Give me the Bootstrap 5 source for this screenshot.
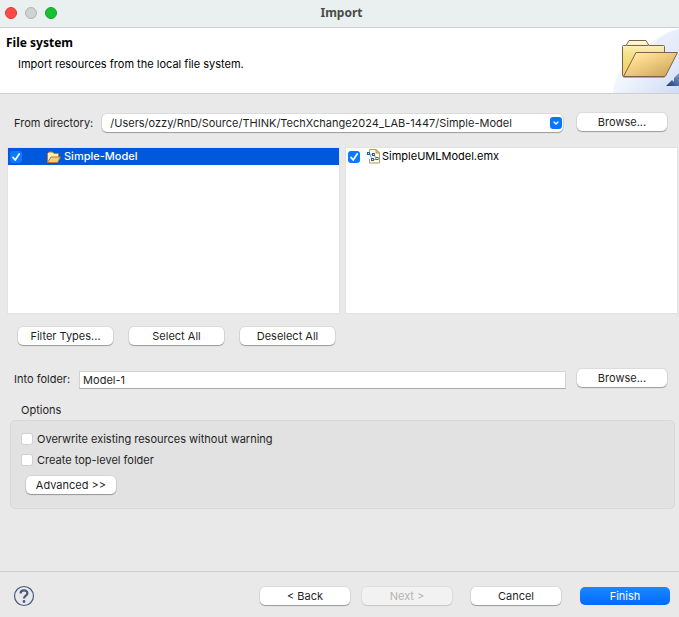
<!DOCTYPE html>
<html lang="en">
<head>
<meta charset="utf-8">
<meta name="viewport" content="width=device-width, initial-scale=1">
<title>Import</title>
<link href="https://cdn.jsdelivr.net/npm/bootstrap@5.3.0/dist/css/bootstrap.min.css" rel="stylesheet">
<style>
  body { font: 11px/16px Inter, "Liberation Sans", sans-serif; color: #1f1f1f; background: #e9e9e9; }
  .titlebar { height: 28px; background: #eaf0f0; border-bottom: 1px solid #cdcfcf; padding: 0 5px; }
  .titlebar h1 { font: 700 12px/16px "Noto Sans", sans-serif; color: #474b4b; padding: 0 0 2px 4px; }
  .lights { gap: 8px; top: 7px; }
  .light { width: 12px; height: 12px; padding: 0; border: 1px solid; border-radius: 50%; }
  .light-close { background: #fe4b47; border-color: #e0352f; }
  .light-min { background: #cfd2d2; border-color: #b0b4b4; }
  .light-zoom { background: #18c132; border-color: #12a028; }
  .banner { height: 66px; background: #fff; border-bottom: 1px solid #cfcfcf; color: #000; }
  .banner h2 { font: 700 12px/16px "Noto Sans", sans-serif; margin: 7px 0 5px 6px; }
  .banner p { margin: 0 0 0 18px; }
  .mac-btn { height: 18px; min-width: 90px; padding: 0 8px; border: 0; border-radius: 5px; background: #fff; color: #1f1f1f;
    font-size: 11px; line-height: 18px; box-shadow: 0 0 0 1px #0000000f, 0 1px 1px #0000004d; }
  .mac-btn:hover { background: #f5f5f5; color: #1f1f1f; }
  .mac-btn:disabled { background: #f2f2f2; color: #b4b4b4; opacity: 1; border: 0; box-shadow: 0 0 0 1px #0000000a, 0 1px 1px #0000001f; }
  .mac-btn.finish, .mac-btn.finish:hover { background: linear-gradient(#1a87ff, #006cff); color: #fff; box-shadow: none; }
  .filters .mac-btn { width: 95px; }
  .field-row { padding: 0 12px 0 14px; }
  .from-row { margin-top: 18px; gap: 14px; }
  .from-field { padding-top: 2px; gap: 9px; }
  .combo select { appearance: none; height: 18px; padding: 0 22px 0 8px; border: 0; border-radius: 5px; background: #fff; color: #1f1f1f;
    font-size: 11px; line-height: 18px; box-shadow: 0 0 0 1px #0000000f, 0 1px 1px #0000004d; }
  .combo svg { position: absolute; right: 1px; top: 3px; pointer-events: none; }
  .lists { margin: 16px 2px 0 8px; gap: 7px; }
  .pane { flex: 1 1 0; min-width: 0; height: 165px; background: #fff; box-shadow: 0 0 0 1px #e2e2e2; color: #000; }
  .entry { height: 17px; line-height: 17px; padding-left: 2px; }
  .entry svg { margin: 0 2px 0 7px; }
  .entry.selected svg { margin-left: 24px; }
  .entry.selected { background: #0058dc; color: #fff; font-weight: 500; }
  .tick { appearance: none; flex: none; width: 12px; height: 12px; border-radius: 3px; margin: 0; background: #fff;
    box-shadow: inset 0 0 0 1px #0000002e; }
  .tick:checked { background: #0a7aff url("data:image/svg+xml,%3Csvg xmlns='http://www.w3.org/2000/svg' viewBox='0 0 12 12'%3E%3Cpath d='M3 6.4 5.2 9 9.2 3' fill='none' stroke='white' stroke-width='1.7' stroke-linecap='round' stroke-linejoin='round'/%3E%3C/svg%3E"); box-shadow: none; }
  .filters { margin: 14px 0 0 18px; gap: 16px; }
  .into-row { margin-top: 24px; gap: 11px; }
  .into-field { gap: 9px; }
  .into-row input { height: 18px; padding: 0 3px; border: 1px solid #d3d3d3; border-bottom-color: #a9a9a9; border-radius: 0; background: #fff; color: #1f1f1f; font-size: 11px; margin-top: 2px; }
  .options { margin: 13px 4px 24px 10px; }
  .options legend { font-size: 11px; line-height: 16px; margin: 0 0 2px 11px; float: none; width: auto; }
  .group { padding: 10px 10px 14px; background: #e2e2e2; border: 1px solid #d8d8d8; border-radius: 5px; }
  .group label { height: 16px; margin-bottom: 5px; gap: 4px; }
  .group .mac-btn { margin: 3px 0 0 5px; }
  .foot { height: 46px; padding: 2px 9px 0 13px; border-top: 1px solid #cdcdcd; }
  .foot-btns { gap: 19px; }
  .step-btns { gap: 12px; }
</style>
</head>
<body class="d-flex flex-column min-vh-100">
<header class="titlebar position-relative d-flex align-items-center">
  <div class="lights d-flex position-absolute">
    <button type="button" class="light light-close" aria-label="Close"></button>
    <button type="button" class="light light-min" aria-label="Minimize" disabled></button>
    <button type="button" class="light light-zoom" aria-label="Zoom"></button>
  </div>
  <h1 class="m-0 flex-fill text-center">Import</h1>
</header>
<section class="banner d-flex justify-content-between overflow-hidden">
  <div>
    <h2>File system</h2>
    <p>Import resources from the local file system.</p>
  </div>
  <svg class="flex-shrink-0" width="67" height="65" viewBox="0 0 67 65" aria-hidden="true">
    <defs>
      <linearGradient id="sky" x1="0" y1="0" x2="1" y2="1"><stop offset="0" stop-color="#fff"/><stop offset=".5" stop-color="#f0f4fc"/><stop offset="1" stop-color="#cfdcf5"/></linearGradient>
      <linearGradient id="back" x1="0" y1="0" x2="0" y2="1"><stop offset="0" stop-color="#fffbe0"/><stop offset=".35" stop-color="#f5e28a"/><stop offset="1" stop-color="#edcf5c"/></linearGradient>
      <linearGradient id="front" x1="0" y1="0" x2="1" y2="1"><stop offset="0" stop-color="#fff3cf"/><stop offset=".3" stop-color="#fbd98c"/><stop offset="1" stop-color="#c59f52"/></linearGradient>
      <linearGradient id="peak" x1="0" y1="1" x2="1" y2="0"><stop offset="0" stop-color="#1d3a78"/><stop offset="1" stop-color="#7f9bcb"/></linearGradient>
    </defs>
    <path d="M1 65C3 45 14 32 32 20 43 11 54 3 67 1V65Z" fill="url(#sky)"/>
    <path d="M39 19C46 11 56 4 67 1V30Z" fill="#dfe8f8" opacity=".5"/>
    <path d="M54 58 60 52 62 54V50L67 45V58Z" fill="url(#peak)"/>
    <path d="M10.500 47V18.500Q10.500 17.500 11.500 17.500H14L17 12.500H34L37 17.500H51.500Q52.500 17.500 52.500 18.500V49H11.500Z" fill="url(#back)" stroke="#80614c"/>
    <path d="M14.500 17.500H36.500" stroke="#80614c"/>
    <path d="M24 24.500H65.500L53.500 48Q53 48.500 52 48.500H11.500Z" fill="url(#front)" stroke="#80614c" stroke-linejoin="round"/>
  </svg>
</section>
<main>
  <div class="from-row field-row d-flex align-items-center">
    <div class="from-field d-flex flex-fill align-items-center">
      <label for="from" class="text-nowrap">From directory:</label>
      <div class="combo position-relative flex-fill">
        <select id="from" class="w-100 d-block"><option>/Users/ozzy/RnD/Source/THINK/TechXchange2024_LAB-1447/Simple-Model</option></select>
        <svg width="12" height="12" viewBox="0 0 12 12" aria-hidden="true"><rect width="12" height="12" rx="3" fill="#0a76ff"/><path d="m4 5 2 2 2-2" fill="none" stroke="#fff" stroke-width="1.400" stroke-linecap="round" stroke-linejoin="round"/></svg>
      </div>
    </div>
    <button type="button" class="btn mac-btn">Browse...</button>
  </div>
  <div class="lists d-flex">
    <ul class="pane list-unstyled mb-0">
      <li><label class="entry selected d-flex align-items-center">
        <input type="checkbox" class="tick" checked>
        <svg width="16" height="14" viewBox="0 0 16 14" aria-hidden="true"><path d="M1.500 12V3.500L3 2H6.500L8 3.500H12.500V7" fill="#fff0bd" stroke="#b9782c"/><path d="M1.500 12.500 5 7H14.500L11.500 12.500Z" fill="#f7ce7b" stroke="#b9782c" stroke-linejoin="round"/></svg>
        <span>Simple-Model</span></label></li>
    </ul>
    <ul class="pane list-unstyled mb-0">
      <li><label class="entry d-flex align-items-center">
        <input type="checkbox" class="tick" checked>
        <svg width="13" height="15" viewBox="0 0 13 15" aria-hidden="true"><path d="M2.500 5V.5H9L12.500 4V14H2.500V10" fill="#fdf8e8" stroke="#b79a5c"/><path d="M9 .5V4H12.500Z" fill="#e6c988" stroke="#b79a5c"/><path d="M2 5 6 5.500M3 6 5 10M6 6 10 9M6 11 10 10" stroke="#7ca2bd"/><g fill="#d5ecf7" stroke="#24648f"><rect x=".5" y="3.500" width="2" height="2"/><rect x="5.500" y="4.500" width="2" height="2"/><rect x="9" y="8.500" width="2" height="2"/><rect x="4.500" y="9.500" width="2" height="2"/></g></svg>
        <span>SimpleUMLModel.emx</span></label></li>
    </ul>
  </div>
  <div class="filters d-flex">
    <button type="button" class="btn mac-btn">Filter Types...</button>
    <button type="button" class="btn mac-btn">Select All</button>
    <button type="button" class="btn mac-btn">Deselect All</button>
  </div>
  <div class="into-row field-row d-flex align-items-start">
    <div class="into-field d-flex flex-fill align-items-center">
      <label for="into" class="text-nowrap">Into folder:</label>
      <input id="into" type="text" class="form-control flex-fill" value="Model-1">
    </div>
    <button type="button" class="btn mac-btn">Browse...</button>
  </div>
  <fieldset class="options">
    <legend>Options</legend>
    <div class="group">
      <label class="d-flex align-items-center"><input type="checkbox" class="tick"><span>Overwrite existing resources without warning</span></label>
      <label class="d-flex align-items-center"><input type="checkbox" class="tick"><span>Create top-level folder</span></label>
      <button type="button" class="btn mac-btn">Advanced &gt;&gt;</button>
    </div>
  </fieldset>
</main>
<footer class="foot mt-auto d-flex align-items-center justify-content-between">
  <button type="button" class="btn p-0 border-0 d-flex" aria-label="Help">
    <svg width="22" height="22" viewBox="0 0 22 22" fill="none" stroke="#465b80" aria-hidden="true"><circle cx="11" cy="11" r="9.500" stroke-width="1.200"/><path d="M7.600 8.400C7.600 4.400 14.400 4.400 14.400 8.200 14.400 10.600 11 10.600 11 13.600" stroke-width="2.200"/><circle cx="11" cy="16.500" r="1.400" fill="#465b80" stroke="none"/></svg>
  </button>
  <div class="foot-btns d-flex">
    <div class="step-btns d-flex"><button type="button" class="btn mac-btn">&lt; Back</button><button type="button" class="btn mac-btn" disabled>Next &gt;</button></div>
    <button type="button" class="btn mac-btn">Cancel</button>
    <button type="button" class="btn mac-btn finish">Finish</button>
  </div>
</footer>
<script src="https://cdn.jsdelivr.net/npm/bootstrap@5.3.0/dist/js/bootstrap.bundle.min.js"></script>
</body>
</html>
